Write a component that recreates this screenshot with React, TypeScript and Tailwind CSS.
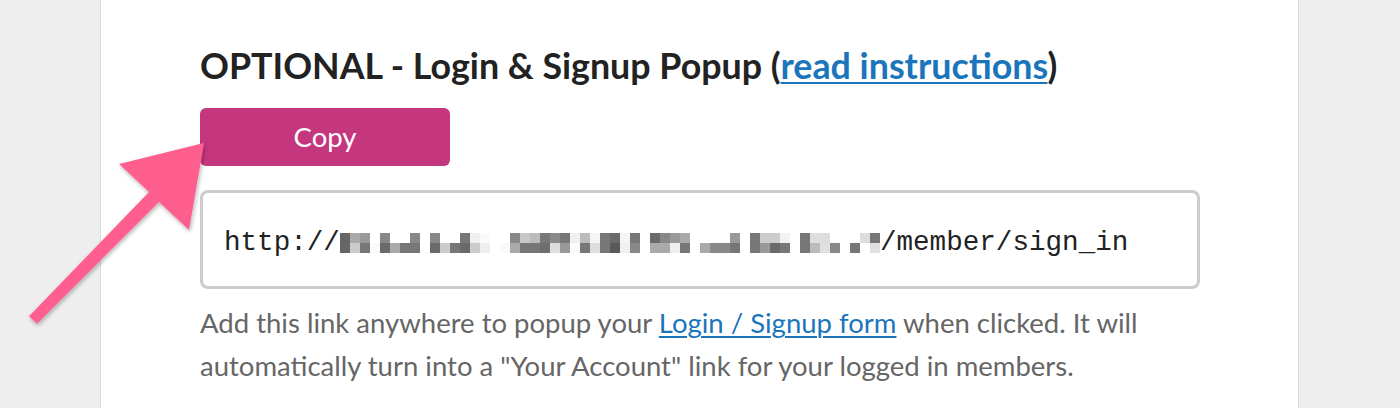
import React from "react";

const TOP = [0x66,0xaa,0x99,0xff,0x88,0xff,0xff,0x88,0xff,0x88,0xff,0xff,0x77,0xf0,0xfa,0xff,0xff,0x88,0xc8,0xbb,0x77,0x8a,0x77,0xf0,0xbb,0xf5,0x77,0x6a,0xf5,0x77,0xff,0x6a,0x88,0x99,0xaa,0xff,0xff,0xff,0xff,0x99,0xff,0x77,0xcc,0xcc,0xf2,0xff,0x77,0xdd,0xdd,0xff,0xff,0xff,0xdd,0x77];
const BOT = [0x66,0xcc,0x77,0xfa,0x6a,0xaa,0x77,0x77,0xff,0x6a,0xcc,0x77,0x6a,0xcc,0xee,0xff,0xfa,0xaa,0x77,0x77,0x6e,0xdd,0x99,0xfa,0x77,0xdd,0x77,0x5a,0xf0,0x88,0xff,0xaa,0xaa,0xee,0x77,0xff,0xaa,0x88,0x88,0x77,0xff,0x77,0x99,0x6a,0x77,0xff,0x77,0xbb,0xe0,0x88,0xff,0x77,0xff,0xe0];

const g = (v: number) => {
  const h = v.toString(16).padStart(2, "0");
  return `#${h}${h}${h}`;
};

function Pixelated() {
  return (
    <svg width={540} height={24} viewBox="0 0 540 24" className="shrink-0">
      {TOP.map((v, i) => (
        <rect key={`t${i}`} x={i * 10} y={3} width={10} height={10} fill={g(v)} />
      ))}
      {BOT.map((v, i) => (
        <rect key={`b${i}`} x={i * 10} y={13} width={10} height={10} fill={g(v)} />
      ))}
    </svg>
  );
}

export default function App() {
  return (
    <div className="relative w-[1400px] h-[408px] overflow-hidden bg-[#eeeeef]">
      <div className="ml-[100px] w-[1199px] h-[408px] bg-white border-x border-[#dcdcdc] pl-[99px] pt-[45px]">
        <h2
          className="text-[35.8px] leading-[42px] font-bold text-[#222222] whitespace-nowrap"
          style={{ fontFamily: "Lato, 'Noto Sans', sans-serif" }}
        >
          OPTIONAL - Login &amp; Signup Popup (
          <a className="text-[#1a75bb] underline decoration-2 underline-offset-[3px]" href="#">
            read instructions
          </a>
          )
        </h2>
        <button
          className="mt-[21px] w-[250px] h-[58px] rounded-[6px] bg-[#c4377f] text-white text-[27.5px] flex items-center justify-center"
          style={{ fontFamily: "Lato, 'Noto Sans', sans-serif" }}
        >
          Copy
        </button>
        <div className="mt-[24px] w-[1000px] h-[99px] border-[3px] border-[#cccccc] rounded-[8px] flex items-center pl-[21px] pt-[6px]">
          <div
            className="flex items-center text-[27.6px] text-[#222222] whitespace-nowrap"
            style={{ fontFamily: "'Liberation Mono', 'Courier New', monospace" }}
          >
            <span>http://</span>
            <Pixelated />
            <span>/member/sign_in</span>
          </div>
        </div>
        <p
          className="mt-[12px] w-[1000px] text-[27.5px] leading-[43px] text-[#666666]"
          style={{ fontFamily: "Lato, 'Noto Sans', sans-serif" }}
        >
          Add this link anywhere to popup your{" "}
          <a className="text-[#1a75bb] underline decoration-[1.5px] underline-offset-[3px]" href="#">
            Login / Signup form
          </a>{" "}
          when clicked. It will
          <br />
          automatically turn into a "Your Account" link for your logged in members.
        </p>
      </div>
      <svg
        className="absolute left-0 top-0 pointer-events-none"
        width={1400}
        height={408}
        viewBox="0 0 1400 408"
      >
        <defs>
          <filter id="sh" x="-20%" y="-20%" width="140%" height="140%">
            <feDropShadow dx="1" dy="2" stdDeviation="2" floodColor="#000" floodOpacity="0.3" />
          </filter>
        </defs>
        <polygon
          points="29,316.2 149,192.1 119,164 204,143 189,230 159,201.9 37,323.8"
          fill="#ff5f8f"
          filter="url(#sh)"
        />
      </svg>
    </div>
  );
}
